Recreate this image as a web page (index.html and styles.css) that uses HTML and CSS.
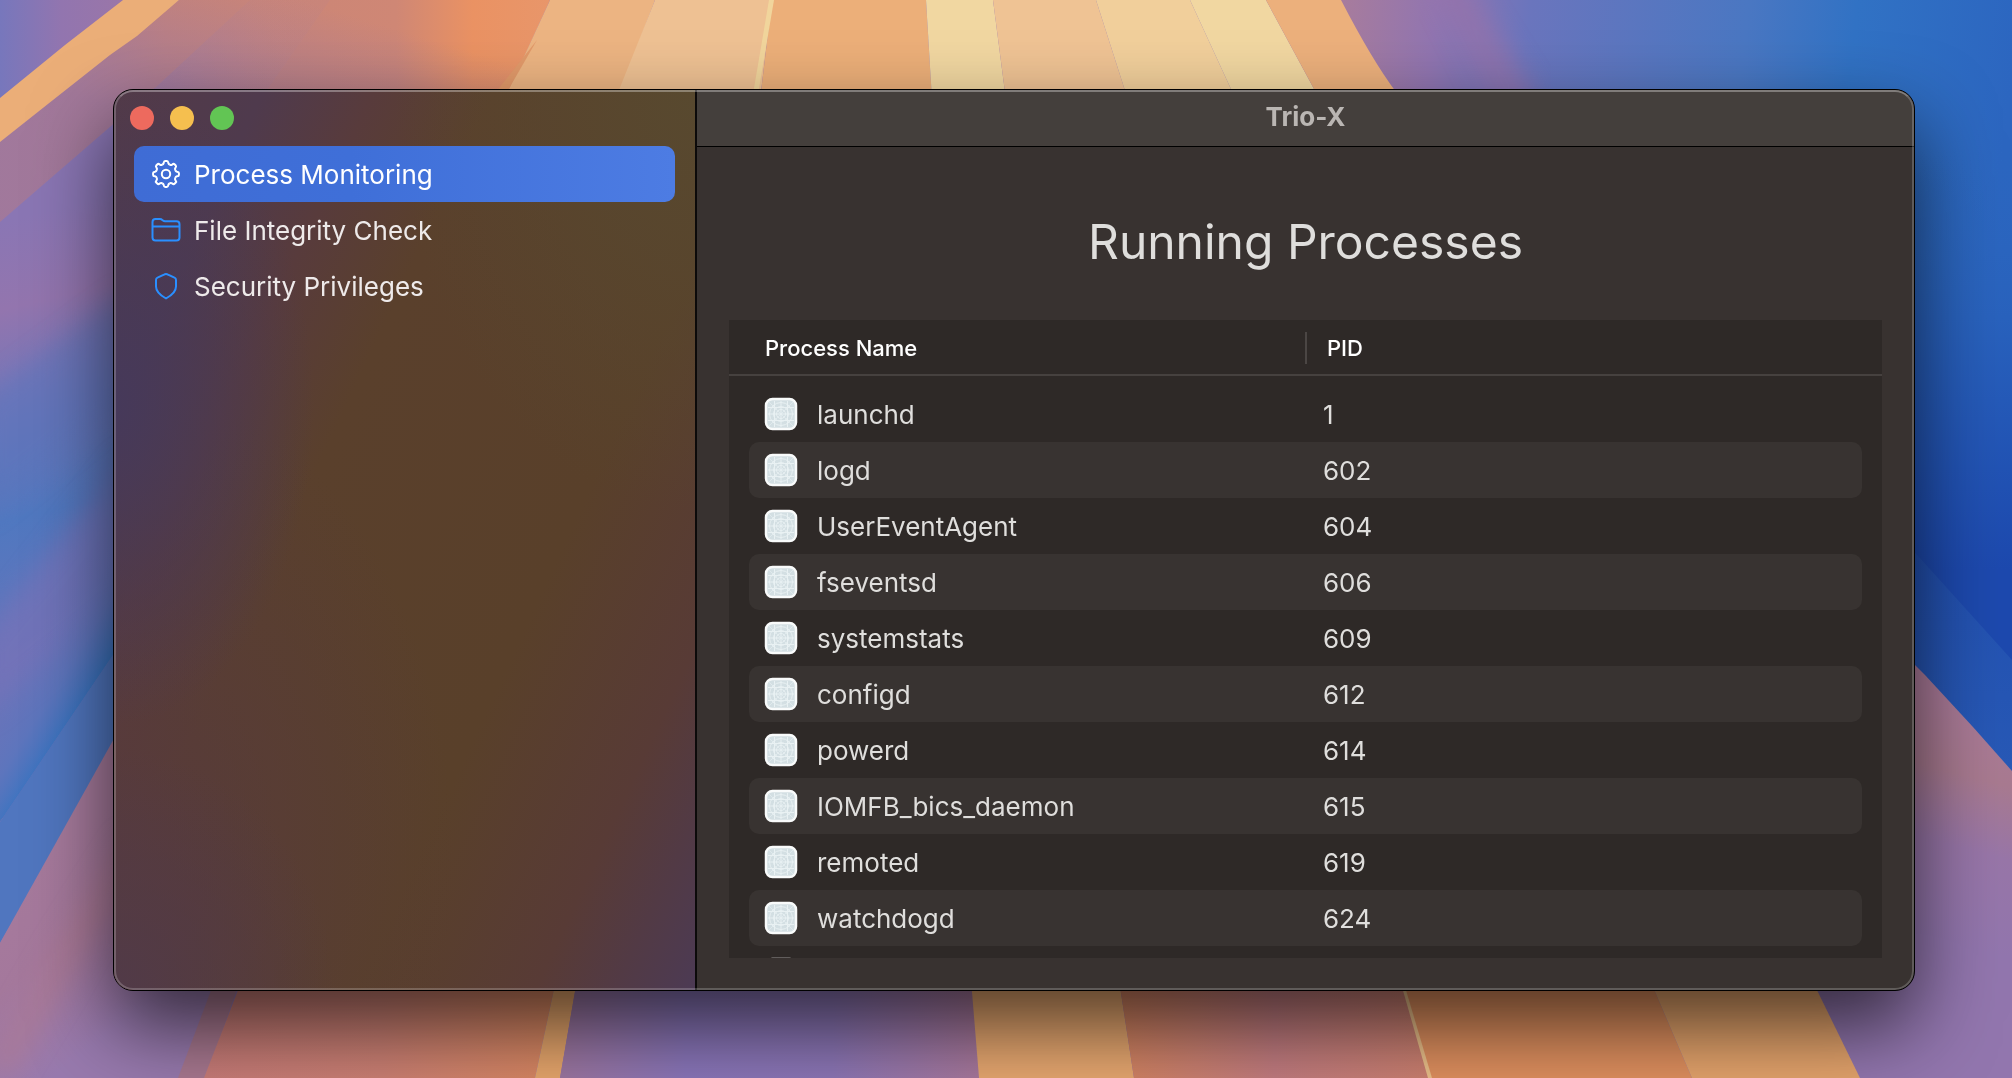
FILE: index.html
```html
<!DOCTYPE html>
<html lang="en">
<head>
<meta charset="utf-8">
<title>Trio-X</title>
<link rel="stylesheet" href="styles.css">
</head>
<body>
<svg class="wallpaper" viewBox="0 0 2012 1078" preserveAspectRatio="none" aria-hidden="true">
  <defs>
    <linearGradient id="corner"><stop offset="0" stop-color="#7777bc"/><stop offset=".5" stop-color="#9275af"/><stop offset="1" stop-color="#9a76a8"/></linearGradient>
    <linearGradient id="salmon" gradientUnits="userSpaceOnUse" x1="0" y1="0" x2="550" y2="0"><stop offset="0" stop-color="#a87c98"/><stop offset=".3" stop-color="#c88478"/><stop offset=".72" stop-color="#cf8775"/><stop offset=".86" stop-color="#ea9263"/><stop offset="1" stop-color="#e8966a"/></linearGradient>
    <linearGradient id="haze" gradientUnits="userSpaceOnUse" x1="300" y1="0" x2="255" y2="150"><stop offset="0" stop-color="#a0789c" stop-opacity="0"/><stop offset="1" stop-color="#a0789c" stop-opacity=".9"/></linearGradient>
    <linearGradient id="left" gradientUnits="userSpaceOnUse" x1="0" y1="222" x2="100" y2="640"><stop offset="0" stop-color="#8a76b4"/><stop offset=".2" stop-color="#9375ae"/><stop offset=".42" stop-color="#7276b9"/><stop offset=".68" stop-color="#5078c0"/><stop offset="1" stop-color="#6674ba"/></linearGradient>
    <linearGradient id="streak" gradientUnits="userSpaceOnUse" x1="140" y1="100" x2="250" y2="0"><stop offset="0" stop-color="#8a76b4"/><stop offset="1" stop-color="#b48090" stop-opacity=".3"/></linearGradient>
    <linearGradient id="left2" gradientUnits="userSpaceOnUse" x1="0" y1="690" x2="65" y2="731"><stop offset="0" stop-color="#6a74bb" stop-opacity="0"/><stop offset=".6" stop-color="#5676bf" stop-opacity=".7"/><stop offset="1" stop-color="#2f74c2"/></linearGradient>
    <linearGradient id="sky" gradientUnits="userSpaceOnUse" x1="1341" y1="0" x2="2012" y2="80"><stop offset="0" stop-color="#a87c9c"/><stop offset=".14" stop-color="#9175b0"/><stop offset=".28" stop-color="#6a75bd"/><stop offset=".6" stop-color="#4a77c2"/><stop offset=".76" stop-color="#3172c4"/><stop offset="1" stop-color="#2c66c0"/></linearGradient>
    <linearGradient id="deep" gradientUnits="userSpaceOnUse" x1="0" y1="150" x2="0" y2="570"><stop offset="0" stop-color="#2c68c0" stop-opacity="0"/><stop offset=".4" stop-color="#2962bd"/><stop offset="1" stop-color="#1d49ae"/></linearGradient>
    <linearGradient id="deep2" gradientUnits="userSpaceOnUse" x1="0" y1="550" x2="0" y2="770"><stop offset="0" stop-color="#2250b0"/><stop offset="1" stop-color="#2859b6"/></linearGradient>
    <linearGradient id="lowLeft" gradientUnits="userSpaceOnUse" x1="40" y1="860" x2="150" y2="1000"><stop offset="0" stop-color="#a67a9c"/><stop offset=".45" stop-color="#a4789c"/><stop offset="1" stop-color="#987aae"/></linearGradient>
    <linearGradient id="lowRight" gradientUnits="userSpaceOnUse" x1="1960" y1="700" x2="1900" y2="930"><stop offset="0" stop-color="#aa7a98"/><stop offset=".3" stop-color="#a87a90"/><stop offset=".6" stop-color="#9876a8"/><stop offset="1" stop-color="#9276ae"/></linearGradient>
    <linearGradient id="bottomPurple"><stop offset="0" stop-color="#9c76a0"/><stop offset=".3" stop-color="#8a76ba"/><stop offset=".65" stop-color="#8c76b6"/><stop offset="1" stop-color="#a8789c"/></linearGradient>
    <linearGradient id="bottomSalmon"><stop offset="0" stop-color="#d48462"/><stop offset=".5" stop-color="#c27c80"/><stop offset="1" stop-color="#cc8070"/></linearGradient>
    <linearGradient id="bottomCoral"><stop offset="0" stop-color="#c87c78"/><stop offset=".5" stop-color="#cc8074"/><stop offset="1" stop-color="#da8862"/></linearGradient>
    <filter id="soft"><feGaussianBlur stdDeviation="12"/></filter>
  </defs>
  <rect width="2012" height="1078" fill="#9175b0"/>
  <polygon points="0,0 123,0 0,98" fill="url(#corner)"/>
  <polygon points="0,142 179,0 550,0 500,110 0,260" fill="url(#salmon)"/>
  <polygon points="0,142 179,0 550,0 500,110 0,260" fill="url(#haze)"/>
  <polygon points="155,88 250,0 330,0 260,100 155,100" fill="url(#streak)" opacity=".5"/>
  <polygon points="0,222 155,88 130,720 0,820" fill="url(#left)"/>
  <polygon points="-20,400 130,290 130,400 -20,520" fill="#5a74bc" opacity=".5" filter="url(#soft)"/>
  <polygon points="-20,640 130,450 130,600 -20,720" fill="#7a72b8" opacity=".6" filter="url(#soft)"/>
  <polygon points="0,650 130,440 130,630 0,822" fill="url(#left2)" opacity=".8"/>
  <polygon points="0,822 130,630 130,720 0,943" fill="#5076bf"/>
  <polygon points="0,943 130,710 260,980 204,1078 0,1078" fill="url(#lowLeft)"/>
  <polygon points="-10,1060 60,940 130,830 130,870 70,980 10,1078" fill="#b07a90" opacity=".5" filter="url(#soft)"/>
  <polygon points="0,98 65,45 123,0 179,0 137,36 110,55 53,100 0,142" fill="#ebae78"/>
  <polygon points="550,0 655,0 617,100 504,100" fill="#ecb482"/>
  <polygon points="537,40 507,92 496,92" fill="#e29a6a"/>
  <polygon points="655,0 772,0 760,100 615,100" fill="#eec193"/>
  <polygon points="772,0 926,0 932,100 760,100" fill="#ecaf79"/>
  <polygon points="769,0 774,0 757,100 752,100" fill="#f1d59c"/>
  <polygon points="926,0 993,0 1006,100 932,100" fill="#f1d7a1"/>
  <polygon points="993,0 1096,0 1128,100 1006,100" fill="#efc394"/>
  <polygon points="1096,0 1190,0 1236,100 1128,100" fill="#f1cf9b"/>
  <polygon points="1190,0 1266,0 1320,100 1236,100" fill="#f1d7a1"/>
  <path d="M1266 0H1350L1400 90L1410 100H1320Z" fill="#ecb07c"/>
  <path d="M1341 0H2012V771L1915 663V150H1420L1396 92Q1372 60 1341 0Z" fill="url(#sky)"/>
  <polygon points="1430,-20 1465,-20 1540,100 1500,120" fill="#9a72a8" opacity=".6" filter="url(#soft)"/>
  <polygon points="1900,140 2012,140 2012,771 1900,650" fill="url(#deep)"/>
  <polygon points="1900,536 2012,660 2012,780 1900,650" fill="url(#deep2)"/>
  <polygon points="1900,650 1925,675 1973,727 2012,771 2012,1078 1850,1078 1800,960" fill="url(#lowRight)"/>
  <polygon points="215,980 240,980 206,1078 178,1078" fill="#a87890"/>
  <polygon points="242,980 556,980 535,1078 204,1078" fill="url(#bottomCoral)"/>
  <polygon points="556,980 577,980 560,1078 535,1078" fill="#e7a66c"/>
  <polygon points="577,980 971,980 979,1078 560,1078" fill="url(#bottomPurple)"/>
  <polygon points="971,980 1119,980 1134,1078 979,1078" fill="#e8a870"/>
  <polygon points="1119,980 1400,980 1430,1078 1134,1078" fill="url(#bottomSalmon)"/>
  <polygon points="1400,980 1650,980 1692,1078 1430,1078" fill="#e0905f"/>
  <polygon points="1400,980 1403,980 1432,1078 1428,1078" fill="#ecc08a"/>
  <polygon points="1650,980 1812,980 1860,1078 1692,1078" fill="#e5a46c"/>
</svg>

<svg class="defs" aria-hidden="true">
  <symbol id="process" viewBox="0 0 34 34">
    <rect x="2" y="2" width="30" height="30" rx="6.500" fill="#d3dfe3" stroke="#f9fbfb" stroke-width="2.500"/>
    <g fill="none" stroke="#e9f1f3" stroke-width="1">
      <path d="M17 4V30M4 17H30M10.500 4V30M23.500 4V30M4 10.500H30M4 23.500H30"/>
      <path d="M5 5L29 29M29 5L5 29" opacity=".6"/>
      <circle cx="17" cy="17" r="11.500"/><circle cx="17" cy="17" r="7.500"/><circle cx="17" cy="17" r="4.500"/>
    </g>
  </symbol>
</svg>

<main class="window">
  <aside class="sidebar">
    <div class="lights">
      <button class="light close" aria-label="Close"></button>
      <button class="light minimize" aria-label="Minimize"></button>
      <button class="light expand" aria-label="Zoom"></button>
    </div>
    <nav class="nav">
      <a class="item selected" href="#processes">
        <svg class="icon" viewBox="-15 -15 30 30">
          <path id="cog" d="M-3.83-9.24C-2.9-9.6-2.5-10-2.3-11Q-2.1-12.9-.9-12.9H.9Q2.1-12.9 2.3-11C2.5-10 2.9-9.6 3.83-9.24"/>
          <use href="#cog" transform="rotate(45)"/><use href="#cog" transform="rotate(90)"/><use href="#cog" transform="rotate(135)"/><use href="#cog" transform="rotate(180)"/><use href="#cog" transform="rotate(225)"/><use href="#cog" transform="rotate(270)"/><use href="#cog" transform="rotate(315)"/>
          <circle r="4.200"/>
        </svg>
        Process Monitoring
      </a>
      <a class="item" href="#files">
        <svg class="icon" viewBox="0 0 30 30">
          <path d="M1.500 22.500V7Q1.500 4 4.500 4H9Q10.300 4 11.300 5L12 5.600Q12.800 6.300 14 6.300H25.500Q28.500 6.300 28.500 9.300V22.500Q28.500 25.500 25.500 25.500H4.500Q1.500 25.500 1.500 22.500ZM1.500 11.500H28.500"/>
        </svg>
        File Integrity Check
      </a>
      <a class="item" href="#privileges">
        <svg class="icon" viewBox="0 0 30 30">
          <path d="M15 3Q16 3 17 3.600L23.500 6.600Q25 7.200 25 9V15.500C25 21 21 24 15.700 27Q15 27.300 14.300 27C9 24 5 21 5 15.500V9Q5 7.200 6.500 6.600L13 3.600Q14 3 15 3Z"/>
        </svg>
        Security Privileges
      </a>
    </nav>
  </aside>

  <section class="content">
    <header class="titlebar">Trio-X</header>
    <div class="body">
      <h1 class="heading">Running Processes</h1>
      <div class="panel">
        <table class="table">
          <thead><tr><th>Process Name</th><th class="pid">PID</th></tr></thead>
          <tbody>
            <tr><td><svg class="app"><use href="#process"/></svg>launchd</td><td>1</td></tr>
            <tr><td><svg class="app"><use href="#process"/></svg>logd</td><td>602</td></tr>
            <tr><td><svg class="app"><use href="#process"/></svg>UserEventAgent</td><td>604</td></tr>
            <tr><td><svg class="app"><use href="#process"/></svg>fseventsd</td><td>606</td></tr>
            <tr><td><svg class="app"><use href="#process"/></svg>systemstats</td><td>609</td></tr>
            <tr><td><svg class="app"><use href="#process"/></svg>configd</td><td>612</td></tr>
            <tr><td><svg class="app"><use href="#process"/></svg>powerd</td><td>614</td></tr>
            <tr><td><svg class="app"><use href="#process"/></svg>IOMFB_bics_daemon</td><td>615</td></tr>
            <tr><td><svg class="app"><use href="#process"/></svg>remoted</td><td>619</td></tr>
            <tr><td><svg class="app"><use href="#process"/></svg>watchdogd</td><td>624</td></tr>
            <tr><td><svg class="app"><use href="#process"/></svg></td><td></td></tr>
          </tbody>
        </table>
      </div>
    </div>
  </section>
</main>
</body>
</html>
```
FILE: styles.css
```css
* { box-sizing: border-box; }

body {
  margin: 0;
  height: 100vh;
  padding: 89px 97px 87px 113px;
  overflow: hidden;
  font-family: Inter, "Liberation Sans", sans-serif;
  font-size: 26px;
  color: #dfdedc;
}

.wallpaper {
  position: fixed;
  inset: 0;
  z-index: -1;
  width: 100%;
  height: 100%;
}

.defs { display: none; }

.window {
  position: relative;
  display: flex;
  height: 100%;
  border: 1px solid #000;
  border-radius: 20px;
  overflow: hidden;
  background: #383230;
  box-shadow: 0 36px 80px rgba(0, 0, 0, .65);
}

/* light rim that runs inside the window edge */
.window::after {
  content: "";
  position: absolute;
  inset: 0;
  border: 2px solid rgba(255, 255, 255, .2);
  border-top-color: rgba(255, 255, 255, .32);
  border-radius: 19px;
  pointer-events: none;
}

.sidebar {
  flex: 0 0 583px;
  padding: 16px 20px;
  border-right: 2px solid #0c0a0a;
  background:
    radial-gradient(ellipse 200px 320px at 0 35%, #46395a, rgba(70, 57, 90, 0)),
    radial-gradient(ellipse 220px 240px at 0 100%, #513a48, rgba(84, 58, 68, 0)),
    radial-gradient(ellipse 340px 480px at 0 85%, #573a3d, rgba(88, 60, 52, 0)),
    radial-gradient(ellipse 300px 420px at 100% 0, #58492f, rgba(88, 73, 47, 0)),
    linear-gradient(115deg, #523a48, #4f3a4d 15%, #583b3c 26%, #5a402c 38%, #59402a 66%, #583b36 84%, #523a45 92%, #4c3a54);
}

.lights {
  display: flex;
  gap: 16px;
  height: 40px;
  margin-left: -4px;
}

.light {
  width: 24px;
  height: 24px;
  padding: 0;
  border: 0;
  border-radius: 50%;
}
.close { background: #ed6a5e; }
.minimize { background: #f5bf4f; }
.expand { background: #62c554; }

.item {
  display: flex;
  align-items: center;
  gap: 13px;
  height: 56px;
  padding: 0 17px;
  border-radius: 10px;
  color: #eeeaea;
  font-size: 26px;
  text-decoration: none;
}
.selected {
  background: linear-gradient(90deg, #3f6cd5, #3f6fd8 40%, #4d7ce3);
  color: #fff;
}

.icon {
  width: 30px;
  height: 30px;
  fill: none;
  stroke: #2a8fff;
  stroke-width: 2;
}
.selected .icon { stroke: #fff; }

.content {
  flex: 1;
  min-width: 0;
  display: flex;
  flex-direction: column;
}

.titlebar {
  flex: 0 0 57px;
  padding-top: 11px;
  border-bottom: 1px solid #000;
  background: #443f3c;
  color: #bab6b3;
  font-weight: 700;
  line-height: 32px;
  text-align: center;
}

.body {
  flex: 1;
  min-height: 0;
  display: flex;
  flex-direction: column;
  padding: 63px 32px 32px;
}

.heading {
  margin: 0 0 46px;
  font-size: 48px;
  font-weight: 400;
  line-height: 64px;
  text-align: center;
}

.panel {
  flex: 1;
  min-height: 0;
  overflow: hidden;
  background: #2e2927;
}

.table, .table thead, .table tbody { display: block; }

.table tr { display: grid; grid-template-columns: 556px 1fr; }

.table thead {
  height: 56px;
  padding: 12px 20px;
  border-bottom: 2px solid #46413f;
}
.table th {
  height: 32px;
  padding: 0 16px;
  color: #fff;
  font-size: 22px;
  font-weight: 500;
  line-height: 32px;
  text-align: left;
}
.table .pid { padding: 0 20px; border-left: 2px solid #4b4644; }

.table tbody { padding: 10px 20px; }
.table tbody tr { height: 56px; border-radius: 10px; }
.table tbody tr:nth-child(even) { background: #383331; }
.table td {
  display: flex;
  align-items: center;
  gap: 19px;
  padding: 0 15px;
}
.table td + td { padding: 0 18px; }

.app { width: 34px; height: 34px; }
```
